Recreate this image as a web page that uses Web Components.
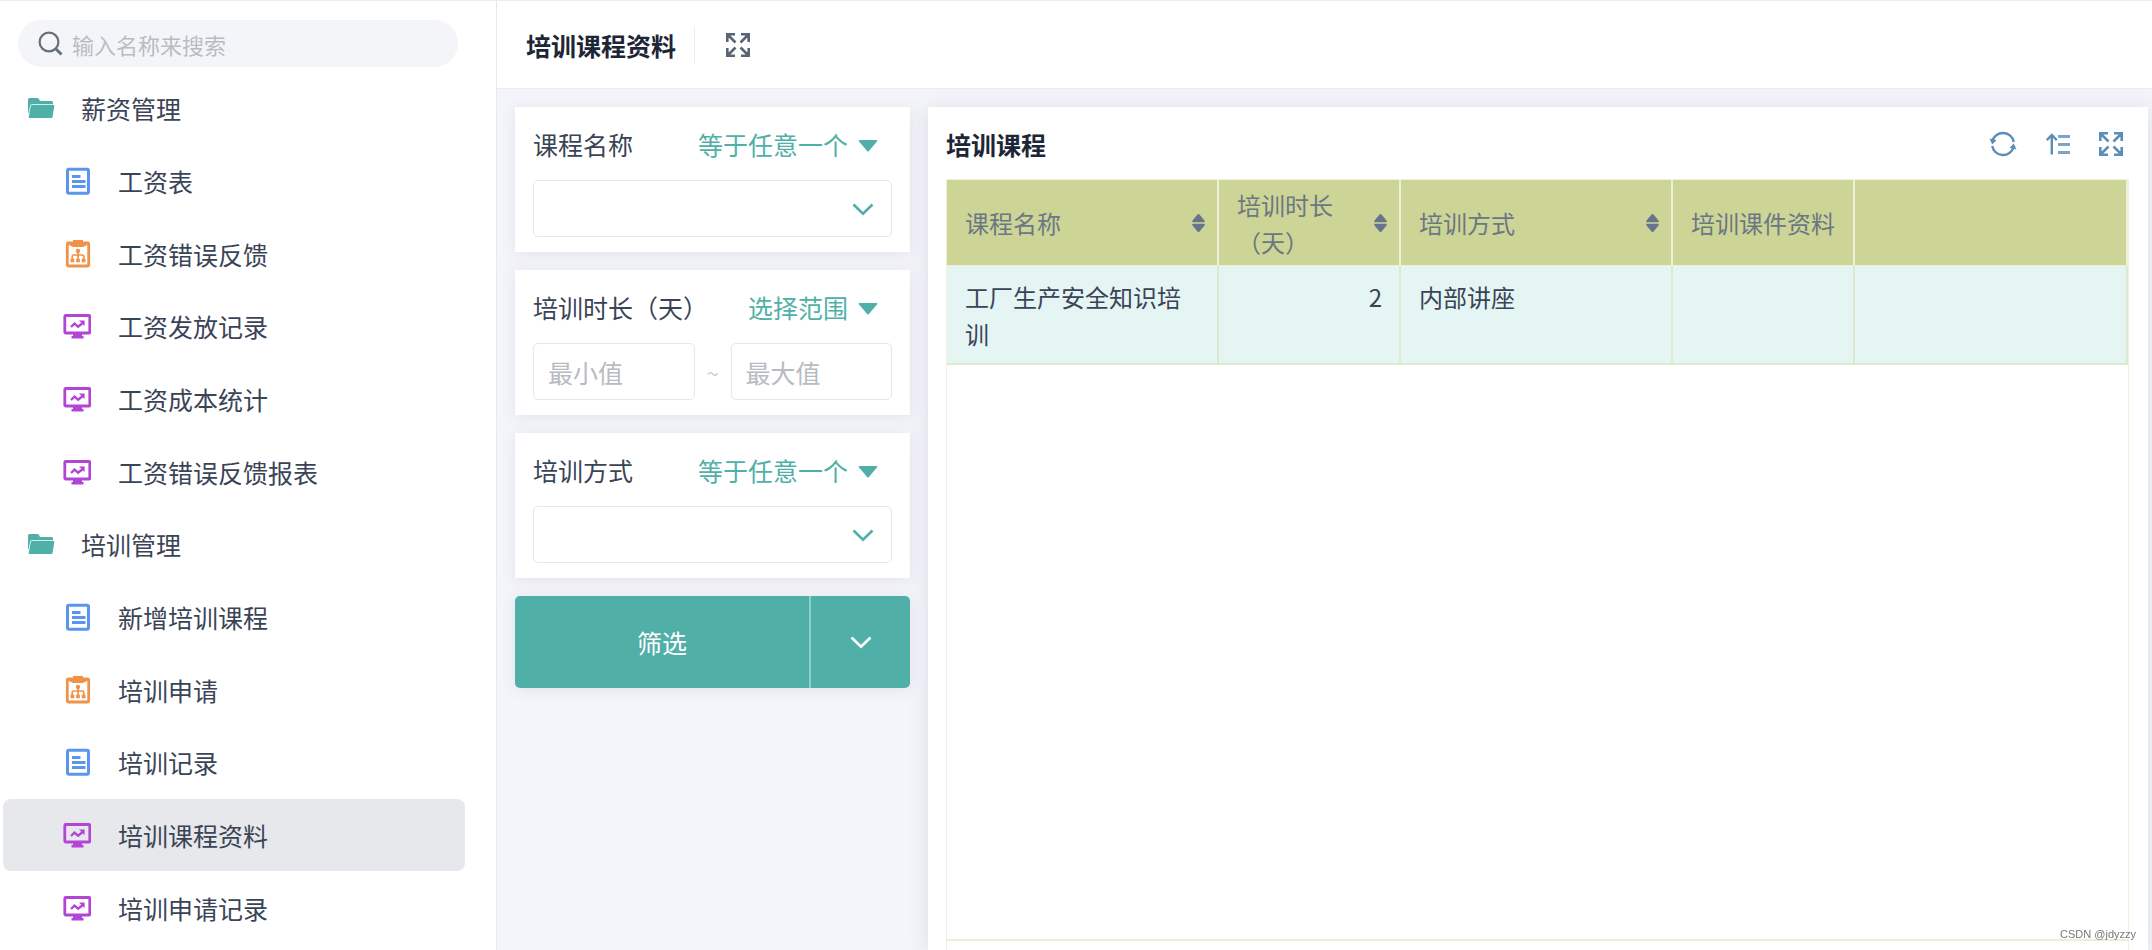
<!DOCTYPE html>
<html lang="zh-CN">
<head>
<meta charset="utf-8">
<title>培训课程资料</title>
<style>
  html, body { margin: 0; }
  body {
    font-family: "Noto Sans CJK SC", "Noto Sans", sans-serif;
    font-size: 25px;
    line-height: 36px;
    color: #3a4456;
    background: #f4f5fa;
    --teal: #50b0a7;
    --line: #ebecee;
  }
</style>
</head>
<body>
<app-shell>
  <side-nav slot="side">
    <nav-item kind="folder">薪资管理</nav-item>
    <nav-item kind="form">工资表</nav-item>
    <nav-item kind="flow">工资错误反馈</nav-item>
    <nav-item kind="board">工资发放记录</nav-item>
    <nav-item kind="board">工资成本统计</nav-item>
    <nav-item kind="board">工资错误反馈报表</nav-item>
    <nav-item kind="folder">培训管理</nav-item>
    <nav-item kind="form">新增培训课程</nav-item>
    <nav-item kind="flow">培训申请</nav-item>
    <nav-item kind="form">培训记录</nav-item>
    <nav-item kind="board" current>培训课程资料</nav-item>
    <nav-item kind="board">培训申请记录</nav-item>
  </side-nav>
  <top-bar slot="top">培训课程资料</top-bar>
  <filter-panel slot="filters">
    <filter-card name="课程名称" operator="等于任意一个"></filter-card>
    <filter-card name="培训时长（天）" operator="选择范围" range></filter-card>
    <filter-card name="培训方式" operator="等于任意一个"></filter-card>
  </filter-panel>
  <data-panel slot="data">培训课程</data-panel>
</app-shell>
<water-mark>CSDN @jdyzzy</water-mark>

<script>
const ICONS = {
  search: `<svg width="26" height="26" viewBox="0 0 26 26" fill="none" stroke="currentColor" stroke-width="2.2"><circle cx="11" cy="11" r="9.4"/><path d="M17.500 17.500l6 6" stroke-width="3"/></svg>`,
  folder: `<svg width="28" height="28" viewBox="0 0 28 28"><path fill="#50b0a7" d="M1 5.500q0-1.500 1.500-1.500h8q1 0 1.500 1l1 2h11.500q1.500 0 1.500 1.500v1.800H5q-1.600 0-1.900 1.500L1.600 19H1z"/><path fill="#50b0a7" d="M5.200 11.100H26.300q1.200 0 1 1.200l-1.700 10.500q-.2 1.200-1.400 1.200H2.500q-1 0-.8-1l2-10.700q.3-1.200 1.500-1.200z"/></svg>`,
  form: `<svg width="28" height="28" viewBox="0 0 28 28" fill="none" stroke="#5a95ee"><rect x="4.500" y="2.200" width="21" height="24" rx="1.500" stroke-width="3"/><path d="M9 9.500h8.500M9 14.500h13.500M9 19.500h13.500" stroke-width="2.800"/></svg>`,
  flow: `<svg width="28" height="28" viewBox="0 0 28 28" fill="none" stroke="#f0924a"><rect x="4.300" y="3" width="21.400" height="23" rx="1" stroke-width="2.800"/><path fill="#f0924a" stroke="none" d="M10 0h10v2.500h4v2.500l-4 2H10L6 5v-2.500h4z"/><circle cx="15" cy="11" r="2.200" fill="#f0924a" stroke="none"/><path d="M15 11v9M9.200 20v-3.500q0-1.500 1.500-1.500h8.600q1.500 0 1.500 1.500V20" stroke-width="1.700"/><path d="M7.500 20.500h3.800M13.100 20.500h3.800M18.700 20.500h3.800" stroke-width="3.600"/></svg>`,
  board: `<svg width="28" height="28" viewBox="0 0 28 28" fill="none" stroke="#b345d6"><rect x="1.800" y="3.500" width="25" height="17.500" rx="1" stroke-width="2.800"/><path fill="#b345d6" stroke="none" d="M10 21h9v3h1.500v2.600H8.500V24H10z"/><path d="M8 15l3.500-3.300 3.600 3 5-4" stroke-width="2.400"/><path fill="#b345d6" stroke="none" d="M16 8.500h5.600V14z"/></svg>`,
  expand: `<svg width="24" height="24" viewBox="0 0 24 24" fill="none" stroke="currentColor" stroke-width="2.600"><path d="M1.300 9V1.300H9M15 1.300h7.700V9M22.700 15v7.700H15M9 22.700H1.300V15M2 2l7.500 7.500M22 2l-7.500 7.500M22 22l-7.500-7.500M2 22l7.500-7.500"/></svg>`,
  refresh: `<svg width="28" height="26" viewBox="0 0 28 26" fill="none" stroke="currentColor" stroke-width="2.400"><path d="M3.400 10A11 11 0 0 1 24.800 11M24.600 16A11 11 0 0 1 3.200 15"/><path fill="currentColor" stroke="none" d="M.5 7.500l7 1.800-4.300 4.200zM27.500 18.500l-7-1.800 4.300-4.200z"/></svg>`,
  sort: `<svg width="24" height="24" viewBox="0 0 24 24" fill="none" stroke="currentColor"><path d="M5.800 22.500V3M.8 8.200l5-5.200 5 5.200" stroke-width="2.400"/><path d="M12 4.500h12M12 12.500h12M12 20.500h12" stroke-width="3" opacity=".8"/></svg>`,
  caret: `<svg width="20" height="12" viewBox="0 0 20 12"><path fill="currentColor" d="M1.500 0h17q1.500 0 .6 1.200l-8.200 9.900q-.9 1-1.800 0L.9 1.200Q0 0 1.500 0z"/></svg>`,
  chevron: `<svg width="22" height="14" viewBox="0 0 22 14" fill="none" stroke="currentColor" stroke-width="2.600"><path d="M1.500 2.500l9.500 9.300 9.500-9.300"/></svg>`,
  updown: `<svg width="13" height="18" viewBox="0 0 13 18" fill="currentColor"><path d="M6.500 0q.5 0 1 .6l5 6q.8 1.600-.8 1.600H1.300Q-.3 8.200.5 6.600l5-6q.5-.6 1-.6zM6.500 18q-.5 0-1-.6l-5-6q-.8-1.600.8-1.600h10.400q1.600 0 .8 1.600l-5 6q-.5.600-1 .6z"/></svg>`
};

const define = (name, render) => customElements.define(name, class extends HTMLElement {
  connectedCallback() {
    if (this.shadowRoot) return;
    const t = document.createElement('template');
    t.innerHTML = `<style>
      *, *::before { box-sizing: border-box; }
      svg { display: block; flex: none; }
      button, input, select { font: inherit; color: inherit; margin: 0; padding: 0; border: 0; background: none; outline: none; }
      button { cursor: pointer; }
    </style>` + render(this);
    this.attachShadow({ mode: 'open' }).append(t.content.cloneNode(true));
  }
});

define('app-shell', () => `
  <style>
    :host { display: grid; box-sizing: border-box; grid-template-columns: 497px minmax(0, 1fr); min-height: 100vh; border-top: 1px solid var(--line); }
    .right { display: flex; flex-direction: column; min-width: 0; }
    main { flex: 1; display: grid; grid-template-columns: 395px minmax(0, 1fr); gap: 18px; padding: 18px 4px 0 18px; overflow: hidden; }
  </style>
  <slot name="side"></slot>
  <div class="right">
    <slot name="top"></slot>
    <main><slot name="filters"></slot><slot name="data"></slot></main>
  </div>`);

define('side-nav', () => `
  <style>
    :host { display: flex; flex-direction: column; box-sizing: border-box; background: #fff; border-right: 1px solid #e6e8ec; padding: 19px 31px 6px 3px; }
    label { display: flex; align-items: center; gap: 8px; height: 47px; margin: 0 7px 5px 15px; padding: 0 20px; border-radius: 24px; background: #f4f5f8; color: #667080; }
    input { flex: 1; min-width: 0; font-size: 22px; }
    input::placeholder { color: #b9bcc3; opacity: 1; }
    nav { flex: 1; display: grid; grid-auto-rows: 1fr; }
  </style>
  <label>${ICONS.search}<input type="search" aria-label="搜索" placeholder="输入名称来搜索"></label>
  <nav><slot></slot></nav>`);

define('nav-item', el => {
  const kind = el.getAttribute('kind');
  return `
  <style>
    :host { display: grid; }
    a { display: flex; align-items: center; min-height: 48px; padding-left: ${kind === 'folder' ? 24 : 60}px; gap: ${kind === 'folder' ? 26 : 27}px; border-radius: 8px; color: inherit; text-decoration: none; }
    :host([current]) a { background: #e7e8ec; }
  </style>
  <a href="#" ${el.hasAttribute('current') ? 'aria-current="page"' : ''}>${ICONS[kind]}<span><slot></slot></span></a>`;
});

define('top-bar', () => `
  <style>
    :host { display: flex; align-items: center; box-sizing: border-box; height: 88px; padding: 0 29px; background: #fff; border-bottom: 1px solid var(--line); color: #1d2636; }
    h1 { margin: 0; padding-right: 18px; font-size: 25px; font-weight: 700; border-right: 1px solid var(--line); }
    button { margin-left: 31px; color: #5b6472; }
  </style>
  <h1><slot></slot></h1>
  <button type="button" aria-label="全屏">${ICONS.expand}</button>`);

define('filter-panel', () => `
  <style>
    :host { display: flex; flex-direction: column; gap: 18px; }
    .actions { display: grid; grid-template-columns: 1fr 101px; height: 92px; border-radius: 5px; overflow: hidden; background: var(--teal); color: #fff; box-shadow: 0 2px 14px rgba(80, 60, 120, .10); }
    .more { display: grid; place-items: center; border-left: 2px solid #8fd0ca; }
  </style>
  <slot></slot>
  <div class="actions">
    <button type="button">筛选</button>
    <button class="more" type="button" aria-label="更多">${ICONS.chevron}</button>
  </div>`);

define('filter-card', el => {
  const name = el.getAttribute('name'), op = el.getAttribute('operator');
  const field = el.hasAttribute('range')
    ? `<div class="range"><input id="f" class="box" placeholder="最小值"><span>~</span><input class="box" aria-label="${name}最大值" placeholder="最大值"></div>`
    : `<div class="pick"><select id="f" class="box"><option></option></select>${ICONS.chevron}</div>`;
  return `
  <style>
    :host { display: flex; flex-direction: column; gap: 18px; box-sizing: border-box; padding: 19px 18px 15px 18px; background: #fff; box-shadow: 0 2px 14px rgba(80, 60, 120, .10); }
    header { display: flex; justify-content: space-between; padding-right: 14px; }
    .op { display: flex; align-items: center; gap: 9px; color: var(--teal); }
    .op svg { margin-top: 4px; }
    select { appearance: none; line-height: 36px; cursor: pointer; }
    .box { display: block; width: 100%; min-width: 0; height: 57px; padding: 0 14px; border: 1px solid #e6e7e9; border-radius: 5px; background: #fff; }
    .box::placeholder { color: #b8bbc2; opacity: 1; }
    .pick { display: grid; grid-template-columns: 1fr; align-items: center; color: var(--teal); }
    .pick > * { grid-area: 1 / 1; }
    .pick svg { justify-self: end; margin-right: 18px; pointer-events: none; }
    .range { display: grid; grid-template-columns: 1fr 36px 1fr; align-items: center; text-align: center; color: #cfd1d6; }
    .range span { font-size: 22px; }
    .range input { color: #364053; }
  </style>
  <header>
    <label for="f">${name}</label>
    <span class="op"><select aria-label="${name}条件"><option>${op}</option></select>${ICONS.caret}</span>
  </header>
  ${field}`;
});

define('data-panel', () => `
  <style>
    :host { display: flex; flex-direction: column; min-width: 0; box-sizing: border-box; padding: 19px 19px 0 18px; background: #fff; box-shadow: 0 2px 20px rgba(80, 60, 120, .14); }
    header { display: flex; justify-content: space-between; align-items: center; height: 36px; margin-bottom: 17px; }
    h2 { margin: 0; font-size: 25px; font-weight: 700; color: #1d2636; }
    .tools { display: flex; align-items: center; gap: 29px; padding-right: 6px; color: #5b8fb9; }
    data-grid { flex: 1; }
    footer { height: 9px; border: 1px solid #f0f2de; border-width: 0 1px; }
  </style>
  <header>
    <h2><slot></slot></h2>
    <div class="tools">
      <button type="button" aria-label="刷新">${ICONS.refresh}</button>
      <button type="button" aria-label="排序">${ICONS.sort}</button>
      <button type="button" aria-label="全屏">${ICONS.expand}</button>
    </div>
  </header>
  <data-grid></data-grid>
  <footer></footer>`);

define('data-grid', () => {
  const head = (text, sortable) => `<th scope="col"><div><span>${text}</span>${sortable ? ICONS.updown : ''}</div></th>`;
  return `
  <style>
    :host { display: block; box-sizing: border-box; border: 1px solid #f0f2de; border-bottom: 2px solid #ebefd6; font-size: 24px; line-height: 37px; }
    table { width: 100%; table-layout: fixed; border-collapse: separate; border-spacing: 0; }
    th, thead td { height: 86px; padding: 0 12px 0 18px; background: #ccd496; color: #6b7784; font-weight: 400; text-align: left; border-right: 2px solid #eef1da; border-bottom: 1px solid #eef1da; }
    th div { display: flex; align-items: center; justify-content: space-between; gap: 12px; }
    th svg { color: #67748b; }
    tbody td { height: 99px; padding: 12px 17px 11px 18px; vertical-align: top; background: #e5f5f4; border-right: 2px solid #dfe9d2; border-bottom: 2px solid #dfe9cb; }
    .num { text-align: right; }
    .a { width: 272px; } .b { width: 182px; }
  </style>
  <table>
    <colgroup><col class="a"><col class="b"><col class="a"><col class="b"><col></colgroup>
    <thead><tr>${head('课程名称', 1)}${head('培训时长（天）', 1)}${head('培训方式', 1)}${head('培训课件资料')}<td></td></tr></thead>
    <tbody><tr><td>工厂生产安全知识培训</td><td class="num">2</td><td>内部讲座</td><td></td><td></td></tr></tbody>
  </table>`;
});

define('water-mark', () => `
  <style>
    :host { position: fixed; right: 16px; bottom: 8px; font: 11px/16px "Liberation Sans", sans-serif; color: #777; pointer-events: none; }
  </style>
  <slot></slot>`);
</script>
</body>
</html>
